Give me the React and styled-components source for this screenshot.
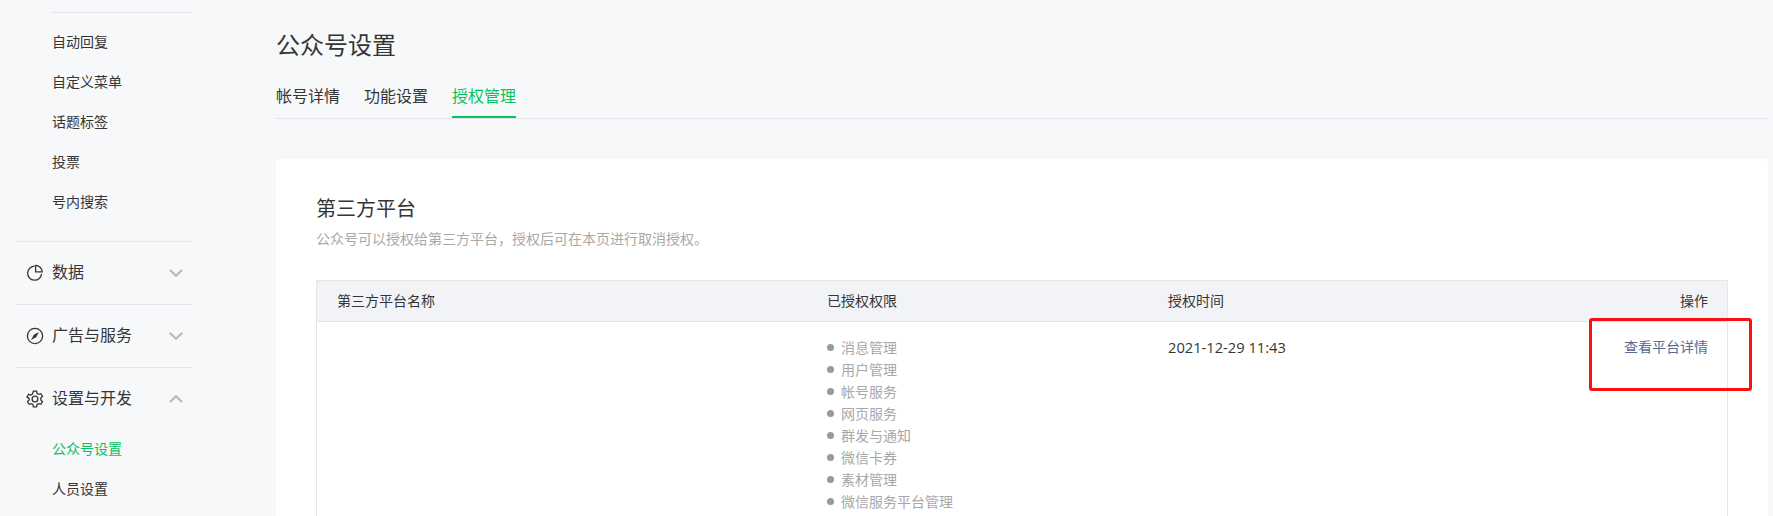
import React from 'react'
import styled, { createGlobalStyle } from 'styled-components'

const Global = createGlobalStyle`
  html, body {
    margin: 0;
    height: 516px;
    overflow: hidden;
    background: #f7f8fa;
    font-family: "Noto Sans CJK SC", "Open Sans", sans-serif;
    color: #353535;
  }
`

const Page = styled.div`
  display: flex;
  width: 1773px;
  height: 516px;
  overflow: hidden;
`

const Sidebar = styled.aside`
  flex: none;
  width: 177px;
  margin-left: 16px;
  padding-top: 12px;
`

const FirstList = styled.div`
  margin-left: 36px;
  padding: 10px 0 18px;
  border-top: 1px solid #e4e6ea;
`

const SubList = styled.div`
  padding: 0 0 0 36px;
`

const SubItem = styled.div`
  height: 40px;
  line-height: 36px;
  font-size: 14px;
  color: ${p => (p.$active ? '#07c160' : '#353535')};
`

const Group = styled.div`
  display: flex;
  align-items: center;
  box-sizing: border-box;
  height: 63px;
  border-top: 1px solid #e4e6ea;
  font-size: 16px;
  color: #353535;
`

const GroupIcon = styled.span`
  display: flex;
  width: 36px;
  padding-left: 10px;
  box-sizing: border-box;
`

const GroupLabel = styled.span`
  flex: 1;
  padding-bottom: 5px;
`

const Chevron = styled.svg`
  margin-right: 10px;
`

const Main = styled.main`
  flex: none;
  width: 1492px;
  margin-left: 83px;
`

const Title = styled.h2`
  margin: 0;
  padding-top: 24px;
  height: 40px;
  line-height: 40px;
  font-size: 24px;
  font-weight: 400;
  color: #353535;
`

const Tabs = styled.div`
  display: flex;
  gap: 24px;
  margin-top: 15px;
  height: 39px;
  border-bottom: 1px solid #e4e6ea;
`

const Tab = styled.div`
  height: 37px;
  line-height: 32px;
  font-size: 16px;
  color: ${p => (p.$active ? '#07c160' : '#353535')};
  border-bottom: 2px solid ${p => (p.$active ? '#07c160' : 'transparent')};
`

const Card = styled.section`
  margin-top: 40px;
  padding: 34px 40px 40px;
  background: #fff;
  border-radius: 2px;
`

const CardTitle = styled.h3`
  margin: 0;
  height: 30px;
  line-height: 30px;
  font-size: 20px;
  font-weight: 400;
  color: #353535;
`

const CardDesc = styled.p`
  margin: 3px 0 0;
  height: 24px;
  line-height: 24px;
  font-size: 14px;
  color: #a8a8a8;
`

const Table = styled.div`
  position: relative;
  margin-top: 30px;
  border: 1px solid #e4e6ea;
`

const Row = styled.div`
  display: grid;
  grid-template-columns: 490px 341px 1fr auto;
  padding: 0 19px 0 20px;
  font-size: 14px;
`

const HeadRow = styled(Row)`
  height: 40px;
  line-height: 38px;
  background: #f2f3f7;
  border-bottom: 1px solid #e4e6ea;
  color: #353535;
`

const BodyRow = styled(Row)`
  padding-top: 12px;
  min-height: 320px;
  line-height: 22px;
`

const Perms = styled.ul`
  margin: 2px 0 0;
  padding: 0;
  list-style: none;
`

const Perm = styled.li`
  display: flex;
  align-items: center;
  gap: 7px;
  height: 22px;
  color: #a8a8a8;

  &::before {
    content: "";
    flex: none;
    width: 7px;
    height: 7px;
    border-radius: 50%;
    background: #999;
  }
`

const Time = styled.div`
  margin-top: 2px;
  font-family: "Open Sans", sans-serif;
  font-size: 14.7px;
  color: #353535;
`

const DetailLink = styled.a`
  margin-top: 1px;
  color: #576b95;
  text-decoration: none;
`

const Highlight = styled.div`
  position: absolute;
  left: 1272px;
  top: 37px;
  width: 157px;
  height: 67px;
  border: 3px solid #fa1010;
  border-radius: 3px;
  pointer-events: none;
`

const iconProps = { width: 18, height: 18, viewBox: '0 0 18 18', fill: 'none', stroke: '#353535', strokeWidth: 1.3 }

const PieIcon = () => (
  <svg {...iconProps}>
    <path d="M8.6 2.2a7 7 0 1 0 7 7.6" />
    <path d="M9.6 1.4c3.4 0 6.4 3 6.6 6.4H9.6z" />
  </svg>
)

const CompassIcon = () => (
  <svg {...iconProps}>
    <circle cx="9" cy="9" r="7.6" />
    <path d="M13 5 10.2 10.2 5 13 7.8 7.8z" fill="#353535" stroke="none" />
  </svg>
)

const GearIcon = () => (
  <svg {...iconProps}>
    <path d="M7.4 1.2h3.2l.5 2.3 1.5.9 2.3-.7 1.6 2.8-1.7 1.6v1.8l1.7 1.6-1.6 2.8-2.3-.7-1.5.9-.5 2.3H7.4l-.5-2.3-1.5-.9-2.3.7-1.6-2.8 1.7-1.6V8.7L1 7.1l1.6-2.8 2.3.7 1.5-.9z" />
    <circle cx="9" cy="9" r="2.9" />
  </svg>
)

const Arrow = ({ up }) => (
  <Chevron width="14" height="8" viewBox="0 0 14 8" fill="none" stroke="#b8b8b8" strokeWidth="2">
    <path d={up ? 'M.8 7.2 7 1.2l6.2 6' : 'M.8.8 7 6.8l6.2-6'} />
  </Chevron>
)

const topItems = ['自动回复', '自定义菜单', '话题标签', '投票', '号内搜索']
const perms = ['消息管理', '用户管理', '帐号服务', '网页服务', '群发与通知', '微信卡券', '素材管理', '微信服务平台管理']

export default function App() {
  return (
    <Page>
      <Global />
      <Sidebar>
        <FirstList>
          {topItems.map(t => <SubItem key={t}>{t}</SubItem>)}
        </FirstList>
        <Group>
          <GroupIcon><PieIcon /></GroupIcon>
          <GroupLabel>数据</GroupLabel>
          <Arrow />
        </Group>
        <Group>
          <GroupIcon><CompassIcon /></GroupIcon>
          <GroupLabel>广告与服务</GroupLabel>
          <Arrow />
        </Group>
        <Group>
          <GroupIcon><GearIcon /></GroupIcon>
          <GroupLabel>设置与开发</GroupLabel>
          <Arrow up />
        </Group>
        <SubList>
          <SubItem $active>公众号设置</SubItem>
          <SubItem>人员设置</SubItem>
        </SubList>
      </Sidebar>
      <Main>
        <Title>公众号设置</Title>
        <Tabs>
          <Tab>帐号详情</Tab>
          <Tab>功能设置</Tab>
          <Tab $active>授权管理</Tab>
        </Tabs>
        <Card>
          <CardTitle>第三方平台</CardTitle>
          <CardDesc>公众号可以授权给第三方平台，授权后可在本页进行取消授权。</CardDesc>
          <Table>
            <HeadRow>
              <div>第三方平台名称</div>
              <div>已授权权限</div>
              <div>授权时间</div>
              <div>操作</div>
            </HeadRow>
            <BodyRow>
              <div />
              <Perms>
                {perms.map(p => <Perm key={p}>{p}</Perm>)}
              </Perms>
              <Time>2021-12-29 11:43</Time>
              <DetailLink href="#">查看平台详情</DetailLink>
            </BodyRow>
            <Highlight />
          </Table>
        </Card>
      </Main>
    </Page>
  )
}
